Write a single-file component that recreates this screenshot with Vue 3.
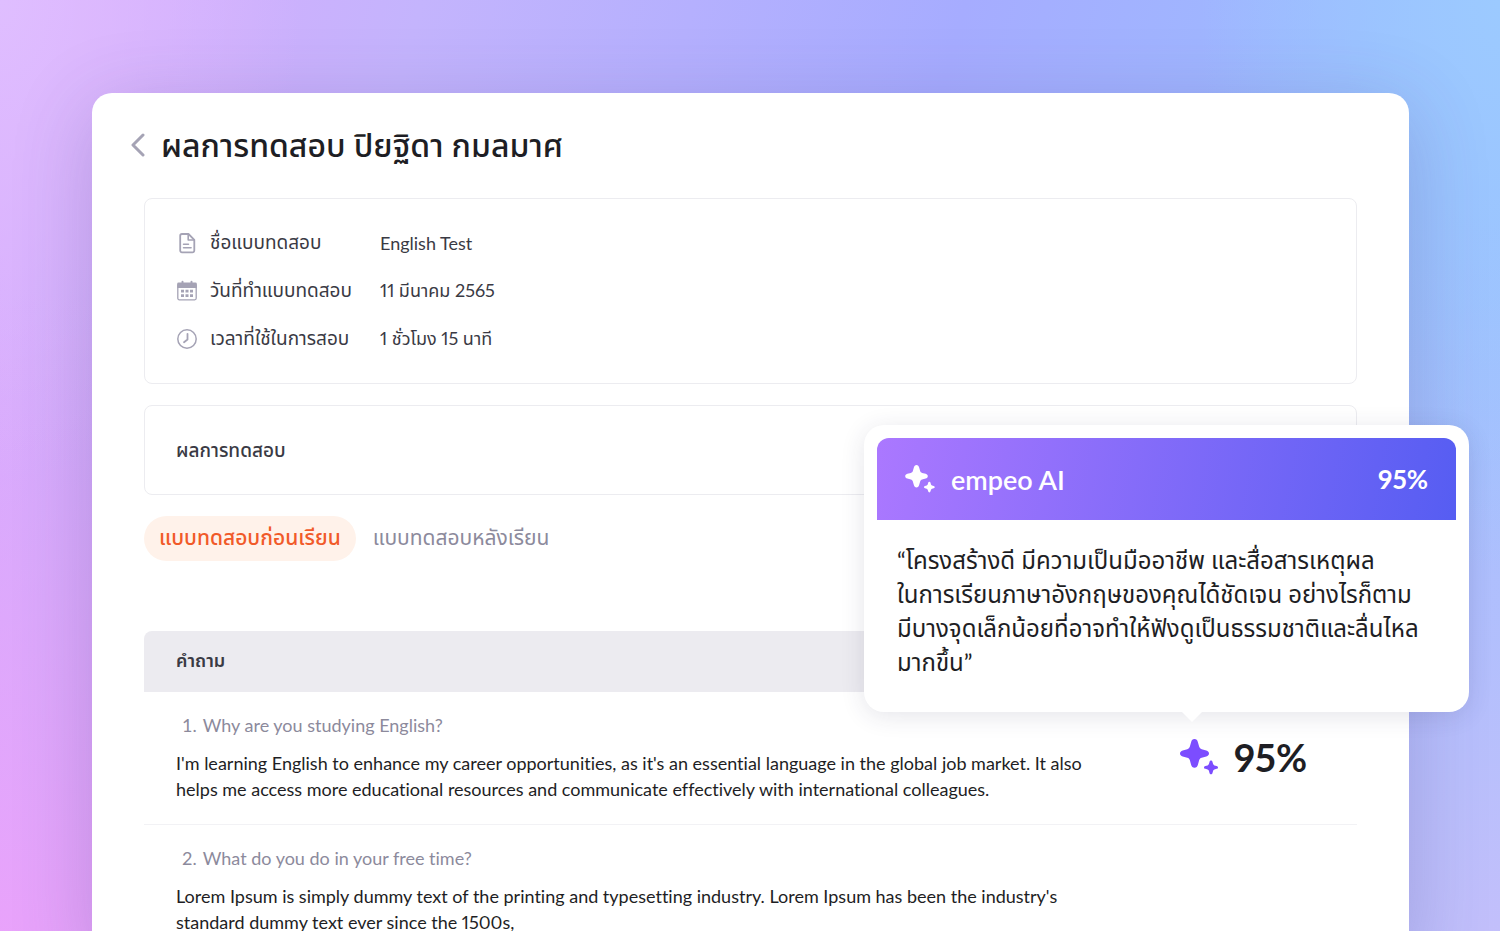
<template>
  <div class="page">
    <main class="card">
      <header class="card-header">
        <button class="back" type="button" aria-label="ย้อนกลับ">
          <svg width="14" height="24" viewBox="0 0 14 24">
            <path d="M12 2L2 12l10 10" stroke="currentColor" stroke-width="3" fill="none" stroke-linecap="round" stroke-linejoin="round"/>
          </svg>
        </button>
        <h1>ผลการทดสอบ ปิยฐิดา กมลมาศ</h1>
      </header>

      <!-- ข้อมูลแบบทดสอบ -->
      <dl class="panel info">
        <div v-for="item in info" :key="item.icon" class="info-row">
          <dt>
            <svg v-if="item.icon === 'file'" width="22" height="22" viewBox="0 0 22 22" fill="none" stroke="currentColor" stroke-width="1.800" stroke-linejoin="round" stroke-linecap="round">
              <path d="M6 2h6.500L18.300 7.800v10.700a1.800 1.800 0 0 1-1.800 1.800H6a1.800 1.800 0 0 1-1.800-1.800V3.800a1.800 1.800 0 0 1 1.800-1.800z"/>
              <path d="M12.200 2.500V8H18" stroke-width="1.600"/>
              <path d="M7.500 12.200h5M7.500 15.800h7.600" stroke-width="1.500"/>
            </svg>
            <svg v-else-if="item.icon === 'calendar'" width="22" height="22" viewBox="0 0 22 22" fill="none" stroke="currentColor">
              <path d="M2.500 2.500h17a1.300 1.300 0 0 1 1.300 1.300V8H1.200V3.800a1.300 1.300 0 0 1 1.300-1.300z" fill="currentColor" stroke="none"/>
              <path d="M6.500 1.800v2M15.500 1.800v2" stroke-width="2" stroke-linecap="round"/>
              <rect x="1.800" y="4" width="18.400" height="15.800" rx="1.500" stroke-width="1.300"/>
              <path d="M5 11.200h12M5 15.600h12" stroke-width="2.800" stroke-dasharray="3 1.500"/>
            </svg>
            <svg v-else width="22" height="22" viewBox="0 0 22 22" fill="none" stroke="currentColor" stroke-linecap="round" stroke-linejoin="round">
              <circle cx="11" cy="11" r="9.200" stroke-width="1.500"/>
              <path d="M11.500 5.800V11.500L8 14.200" stroke-width="1.800"/>
            </svg>
            {{ item.label }}
          </dt>
          <dd>{{ item.value }}</dd>
        </div>
      </dl>

      <section class="panel result">
        <h2>ผลการทดสอบ</h2>
      </section>

      <nav class="tabs">
        <button
          v-for="tab in tabs"
          :key="tab.id"
          type="button"
          :class="['tab', { active: activeTab === tab.id }]"
          @click="activeTab = tab.id"
        >{{ tab.label }}</button>
      </nav>

      <!-- ตารางคำถาม -->
      <table class="questions">
        <thead>
          <tr>
            <th scope="col">คำถาม</th>
            <th scope="col" class="score-col"></th>
          </tr>
        </thead>
        <tbody>
          <tr v-for="(item, index) in questions" :key="item.question">
            <td class="answer">
              <p class="question"><span class="number">{{ index + 1 }}.</span>{{ item.question }}</p>
              <p class="text">{{ item.answer }}</p>
            </td>
            <td class="score-cell">
              <div v-if="item.score" class="score">
                <svg width="38" height="36" viewBox="0 0 38 36" fill="currentColor">
                  <path :d="bigStar"/>
                  <path :d="smallStar"/>
                </svg>
                <strong>{{ item.score }}%</strong>

                <!-- ความเห็นจาก AI -->
                <aside class="popover">
                  <div class="popover-header">
                    <svg width="30" height="28" viewBox="0 0 38 36" fill="currentColor">
                      <path :d="bigStar"/>
                      <path :d="smallStar"/>
                    </svg>
                    <span class="brand">empeo AI</span>
                    <strong>{{ item.score }}%</strong>
                  </div>
                  <p class="feedback">
                    <span v-for="line in feedback" :key="line">{{ line }}</span>
                  </p>
                </aside>
              </div>
            </td>
          </tr>
        </tbody>
      </table>
    </main>
  </div>
</template>

<script setup>
import { ref } from 'vue'

const bigStar = 'M14.500 0c1.800 0 2.900 1.200 3.400 3.200l1.300 4.600c.5 1.300 1.200 2 2.500 2.400l4.600 1.200c1.700.5 2.700 1.600 2.700 3s-1 2.500-2.700 3l-4.600 1.300c-1.300.4-2 1.100-2.500 2.400l-1.300 4.700c-.5 1.900-1.600 3-3.400 3s-2.900-1.100-3.400-3l-1.300-4.700c-.5-1.300-1.200-2-2.500-2.400l-4.600-1.300c-1.700-.5-2.700-1.600-2.700-3s1-2.500 2.700-3l4.600-1.200c1.300-.4 2-1.100 2.500-2.400l1.300-4.600c.5-2 1.600-3.200 3.400-3.200z'
const smallStar = 'M31 21.500c.8 0 1.300.6 1.500 1.400l.6 2.200c.3.700.6 1 1.300 1.300l2.200.6c.8.2 1.400.7 1.400 1.400s-.6 1.200-1.400 1.400l-2.200.6c-.7.3-1 .6-1.300 1.300l-.6 2.200c-.2.800-.7 1.400-1.500 1.400s-1.300-.6-1.500-1.400l-.6-2.200c-.3-.7-.6-1-1.300-1.300l-2.200-.6c-.8-.2-1.400-.7-1.400-1.400s.6-1.200 1.400-1.400l2.200-.6c.7-.3 1-.6 1.300-1.300l.6-2.200c.2-.8.7-1.400 1.500-1.400z'

const activeTab = ref('before')

const tabs = [
  { id: 'before', label: 'แบบทดสอบก่อนเรียน' },
  { id: 'after', label: 'แบบทดสอบหลังเรียน' }
]

const info = [
  { icon: 'file', label: 'ชื่อแบบทดสอบ', value: 'English Test' },
  { icon: 'calendar', label: 'วันที่ทำแบบทดสอบ', value: '11 มีนาคม 2565' },
  { icon: 'clock', label: 'เวลาที่ใช้ในการสอบ', value: '1 ชั่วโมง 15 นาที' }
]

const questions = [
  {
    question: 'Why are you studying English?',
    answer: "I'm learning English to enhance my career opportunities, as it's an essential language in the global job market. It also helps me access more educational resources and communicate effectively with international colleagues.",
    score: 95
  },
  {
    question: 'What do you do in your free time?',
    answer: "Lorem Ipsum is simply dummy text of the printing and typesetting industry. Lorem Ipsum has been the industry's standard dummy text ever since the 1500s,"
  }
]

const feedback = [
  '“โครงสร้างดี มีความเป็นมืออาชีพ และสื่อสารเหตุผล',
  'ในการเรียนภาษาอังกฤษของคุณได้ชัดเจน อย่างไรก็ตาม',
  'มีบางจุดเล็กน้อยที่อาจทำให้ฟังดูเป็นธรรมชาติและลื่นไหล',
  'มากขึ้น”'
]
</script>

<style>
body {
  margin: 0;
}
</style>

<style scoped>
.page {
  box-sizing: border-box;
  min-height: 100vh;
  padding: 93px 91px 0 92px;
  display: flex;
  font-family: Lato, "Noto Sans Thai", "Noto Sans", sans-serif;
  font-variant-ligatures: none;
  font-variant-numeric: proportional-nums;
  color: #1e1e24;
  background:
    radial-gradient(ellipse 20% 60% at 100% 0%, #9ccaff 0%, rgba(156, 202, 255, 0) 100%),
    radial-gradient(ellipse 20% 50% at 0% 0%, #dfbeff 0%, rgba(223, 190, 255, 0) 100%),
    radial-gradient(ellipse 50% 70% at 0% 100%, #eaa2fb 0%, rgba(234, 162, 251, 0) 100%),
    radial-gradient(ellipse 40% 80% at 100% 100%, #c4bffb 0%, rgba(196, 191, 251, 0) 100%),
    linear-gradient(105deg, #dbaafd 0%, #c4b4fd 24%, #a6acff 55%, #9bbcff 80%, #98c0ff 100%);
}

.card {
  flex: 1;
  min-width: 0;
  padding: 28px 52px 0;
  border-radius: 20px;
  border-bottom-left-radius: 0;
  border-bottom-right-radius: 0;
  background: #fff;
  box-shadow: 0 16px 80px rgba(70, 60, 130, 0.24);
}

h1,
h2,
p,
dl,
dd {
  margin: 0;
}

button {
  border: 0;
  background: none;
  font-family: inherit;
  cursor: pointer;
}

svg {
  flex: none;
}

.card-header {
  display: flex;
  align-items: center;
  gap: 16px;
  height: 48px;
  margin: 0 0 29px -13px;
}

.back {
  display: flex;
  padding: 0;
  color: #a5a3b5;
}

h1 {
  font-size: 32px;
  font-weight: 500;
  line-height: 48px;
  white-space: nowrap;
}

.panel {
  padding: 20px 31px;
  border: 1px solid #ececf0;
  border-radius: 8px;
}

.info {
  margin-bottom: 21px;
}

.info-row {
  display: flex;
  align-items: center;
  height: 48px;
  font-size: 18px;
  color: #3a3a44;
  white-space: nowrap;
}

dt {
  display: flex;
  align-items: center;
  gap: 12px;
  width: 204px;
  font-size: 19px;
}

dt svg {
  color: #a5a3b5;
}

.result {
  margin-bottom: 21px;
}

h2 {
  font-size: 19px;
  font-weight: 500;
  line-height: 48px;
  color: #3a3a44;
}

.tabs {
  display: flex;
  gap: 2px;
  margin-bottom: 70px;
}

.tab {
  height: 45px;
  padding: 0 15px;
  border-radius: 23px;
  font-size: 21px;
  color: #8c8a9c;
  white-space: nowrap;
}

.tab.active {
  font-weight: 500;
  color: #f15a29;
  background: #fff2ea;
}

.questions {
  width: 100%;
  border-collapse: separate;
  border-spacing: 0;
  table-layout: fixed;
}

th {
  height: 61px;
  padding: 0 32px;
  font-size: 18px;
  font-weight: 600;
  text-align: left;
  color: #3a3a44;
  background: #ecebf0;
}

th:first-child {
  border-top-left-radius: 8px;
}

.score-col {
  width: 177px;
  padding: 0;
  border-top-right-radius: 8px;
}

td {
  padding: 20px 0 22px;
  border-bottom: 1px solid #f2f2f5;
  vertical-align: top;
}

.answer {
  padding-left: 32px;
  padding-right: 64px;
}

.question {
  display: flex;
  gap: 6px;
  margin: 0 0 12px 6px;
  font-size: 18px;
  line-height: 26px;
  color: #8c8a9c;
}

.number {
  font-variant-numeric: tabular-nums;
}

.text {
  font-size: 18px;
  line-height: 26px;
}

.score {
  position: relative;
  display: flex;
  align-items: center;
  gap: 16px;
  margin-top: 23px;
  color: #7c4dff;
}

.score strong {
  font-size: 38px;
  line-height: 44px;
  color: #1e1e24;
}

/* กล่องลอยเหนือคะแนน */
.popover {
  position: absolute;
  right: -112px;
  bottom: 67px;
  box-sizing: border-box;
  width: 605px;
  padding: 13px 13px 33px;
  border-radius: 20px;
  background: #fff;
  box-shadow: 0 4px 24px rgba(40, 40, 80, 0.12);
}

.popover::after {
  content: "";
  position: absolute;
  top: 100%;
  left: 318px;
  border: 10px solid transparent;
  border-top-color: #fff;
  border-bottom: 0;
}

.popover-header {
  display: flex;
  align-items: center;
  gap: 16px;
  height: 82px;
  padding: 0 28px;
  border-radius: 12px 12px 0 0;
  color: #fff;
  background: linear-gradient(100deg, #ab78ff 0%, #565df2 100%);
}

.brand {
  font-size: 27px;
  font-weight: 600;
}

.popover-header strong {
  margin-left: auto;
  font-size: 26px;
  color: #fff;
}

.feedback {
  padding: 23px 20px 0;
  font-size: 24px;
  line-height: 34px;
  color: #1e1e24;
}

.feedback span {
  display: block;
  white-space: nowrap;
}
</style>
